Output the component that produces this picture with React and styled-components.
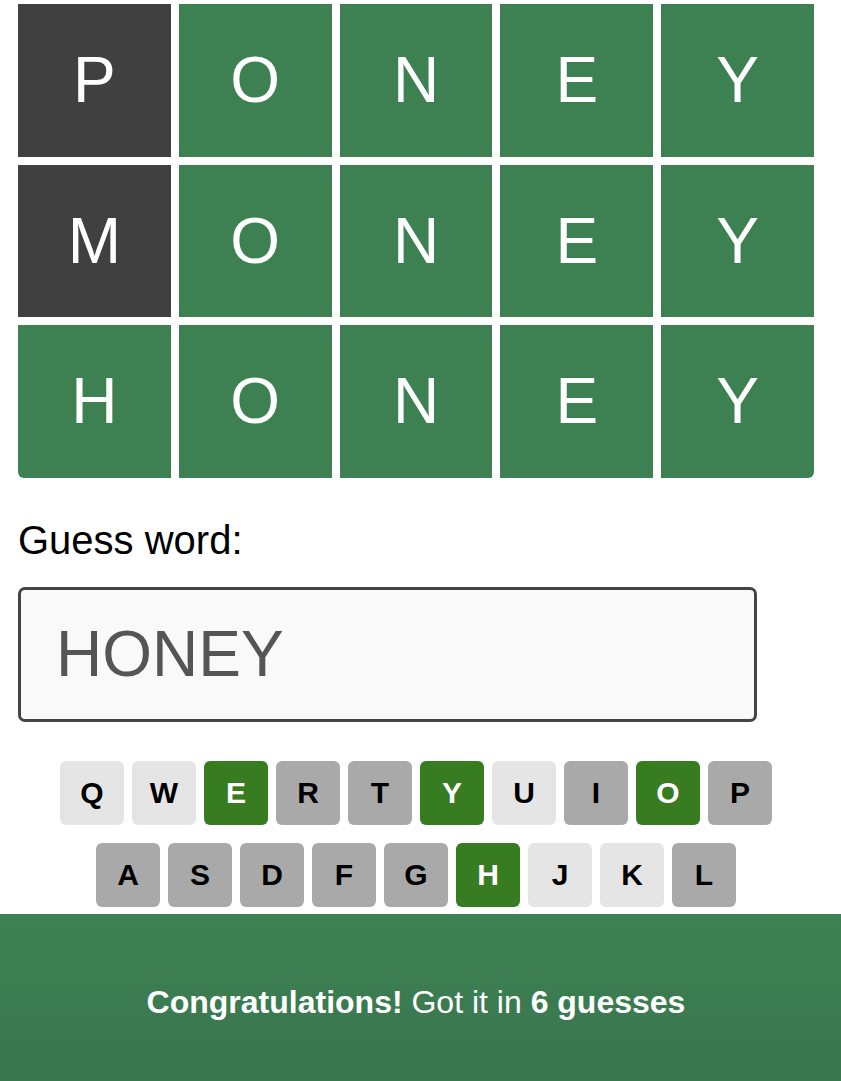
import React from "react";
import styled, { createGlobalStyle, css } from "styled-components";

const GlobalStyle = createGlobalStyle`
    html, body {
        margin: 0;
        padding: 0;
        background: #fff;
        font-family: "Liberation Sans", Arial, Helvetica, sans-serif;
    }
`;

const COLORS = {
    absent: "#404040",
    correct: "#3d8153",
};

const KEY_COLORS = {
    unused: { bg: "#e5e5e5", fg: "#000" },
    absent: { bg: "#a9a9a9", fg: "#000" },
    correct: { bg: "#387c22", fg: "#fff" },
};

const Page = styled.div`
    width: 832px;
    box-sizing: border-box;
    padding: 4px 18px 0;
`;

const Board = styled.div`
    display: flex;
    flex-direction: column;
    gap: 8px;
    border-radius: 0 0 6px 6px;
    overflow: hidden;
`;

const Row = styled.div`
    display: grid;
    grid-template-columns: repeat(5, 1fr);
    gap: 8px;
`;

const Tile = styled.div`
    height: 152.5px;
    display: flex;
    align-items: center;
    justify-content: center;
    color: #fff;
    font-size: 64px;
    background: ${props => COLORS[props.state]};
`;

const Label = styled.label`
    display: block;
    margin-top: 39px;
    font-size: 40px;
    line-height: 46px;
    color: #000;
`;

const Input = styled.div`
    margin-top: 24px;
    width: 739px;
    height: 135px;
    box-sizing: border-box;
    border: 3px solid #444;
    border-radius: 7px;
    background: #f9f9f9;
    padding-left: 35px;
    display: flex;
    align-items: center;
    font-size: 64px;
    color: #555;
`;

const Keyboard = styled.div`
    margin-top: 39px;
    display: flex;
    flex-direction: column;
    align-items: center;
    gap: 18px;
`;

const KeyRow = styled.div`
    display: flex;
    gap: 8px;
`;

const Key = styled.div`
    width: 64px;
    height: 64px;
    border-radius: 6px;
    display: flex;
    align-items: center;
    justify-content: center;
    font-weight: 700;
    font-size: 30px;
    ${props => css`
        background: ${KEY_COLORS[props.state].bg};
        color: ${KEY_COLORS[props.state].fg};
    `}
`;

const Banner = styled.div`
    margin-top: 7px;
    width: 841px;
    height: 167px;
    box-sizing: border-box;
    padding: 70px 0 0 0;
    background: linear-gradient(#3d8153, #3a764f);
    color: #fff;
    font-size: 32px;
    line-height: 36px;
`;

const BannerText = styled.div`
    width: 832px;
    text-align: center;
`;

const guesses = [
    { word: "PONEY", states: ["absent", "correct", "correct", "correct", "correct"] },
    { word: "MONEY", states: ["absent", "correct", "correct", "correct", "correct"] },
    { word: "HONEY", states: ["correct", "correct", "correct", "correct", "correct"] },
];

const keyState = {
    Q: "unused", W: "unused", E: "correct", R: "absent", T: "absent",
    Y: "correct", U: "unused", I: "absent", O: "correct", P: "absent",
    A: "absent", S: "absent", D: "absent", F: "absent", G: "absent",
    H: "correct", J: "unused", K: "unused", L: "absent",
};

const keyRows = ["QWERTYUIOP", "ASDFGHJKL"];

export default function App() {
    return (
        <>
            <GlobalStyle />
            <Page>
                <Board>
                    {guesses.map((g, i) => (
                        <Row key={i}>
                            {g.word.split("").map((ch, j) => (
                                <Tile key={j} state={g.states[j]}>
                                    {ch}
                                </Tile>
                            ))}
                        </Row>
                    ))}
                </Board>
                <Label>Guess word:</Label>
                <Input>HONEY</Input>
                <Keyboard>
                    {keyRows.map(r => (
                        <KeyRow key={r}>
                            {r.split("").map(ch => (
                                <Key key={ch} state={keyState[ch]}>
                                    {ch}
                                </Key>
                            ))}
                        </KeyRow>
                    ))}
                </Keyboard>
            </Page>
            <Banner>
                <BannerText>
                    <b>Congratulations!</b> Got it in <b>6 guesses</b>
                </BannerText>
            </Banner>
        </>
    );
}
